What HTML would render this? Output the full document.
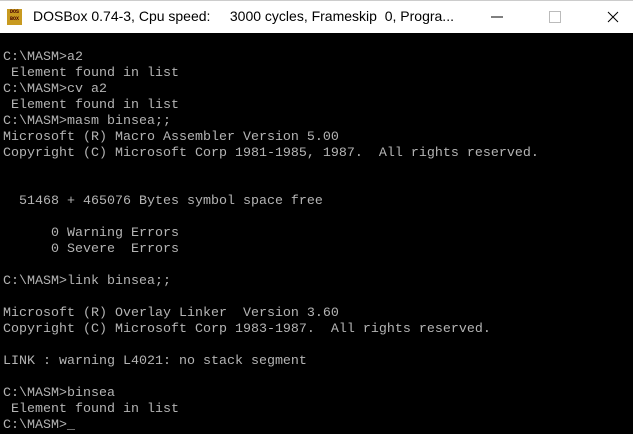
<!DOCTYPE html>
<html><head><meta charset="utf-8"><style>
html,body{margin:0;padding:0;width:633px;height:431px;overflow:hidden;background:#000}
#tb{position:absolute;left:0;top:0;width:633px;height:33px;background:#fff;border-top:1px solid #ccc;box-sizing:border-box}
#tt{position:absolute;left:33px;top:7px;font:14px "Liberation Sans",sans-serif;color:#000;white-space:pre}
#ic{position:absolute;left:7px;top:8px;width:15px;height:16px;background:#c89a20;font:bold 5px "Liberation Mono",monospace;color:#400;line-height:7px;text-align:center}
#term{position:absolute;left:3px;top:50px;font:13.33px/16px "Liberation Mono",monospace;color:#b4b4b4;white-space:pre;margin:0}
</style></head><body>
<div id="tb">
<div id="ic">DOS<br>BOX</div>
<div id="tt">DOSBox 0.74-3, Cpu speed:     3000 cycles, Frameskip  0, Progra...</div>
<svg style="position:absolute;left:490px;top:10px" width="14" height="12"><path d="M1 6H13" stroke="#000" stroke-width="1"/></svg>
<div style="position:absolute;left:549px;top:10px;width:10px;height:10px;border:1px solid #bbb"></div>
<svg style="position:absolute;left:607px;top:10px" width="12" height="12"><path d="M1 1L11 11M11 1L1 11" stroke="#000" stroke-width="1"/></svg>
</div>
<pre id="term">C:\MASM>a2
 Element found in list
C:\MASM>cv a2
 Element found in list
C:\MASM>masm binsea;;
Microsoft (R) Macro Assembler Version 5.00
Copyright (C) Microsoft Corp 1981-1985, 1987.  All rights reserved.


  51468 + 465076 Bytes symbol space free

      0 Warning Errors
      0 Severe  Errors

C:\MASM>link binsea;;

Microsoft (R) Overlay Linker  Version 3.60
Copyright (C) Microsoft Corp 1983-1987.  All rights reserved.

LINK : warning L4021: no stack segment

C:\MASM>binsea
 Element found in list
C:\MASM>_</pre>
</body></html>
